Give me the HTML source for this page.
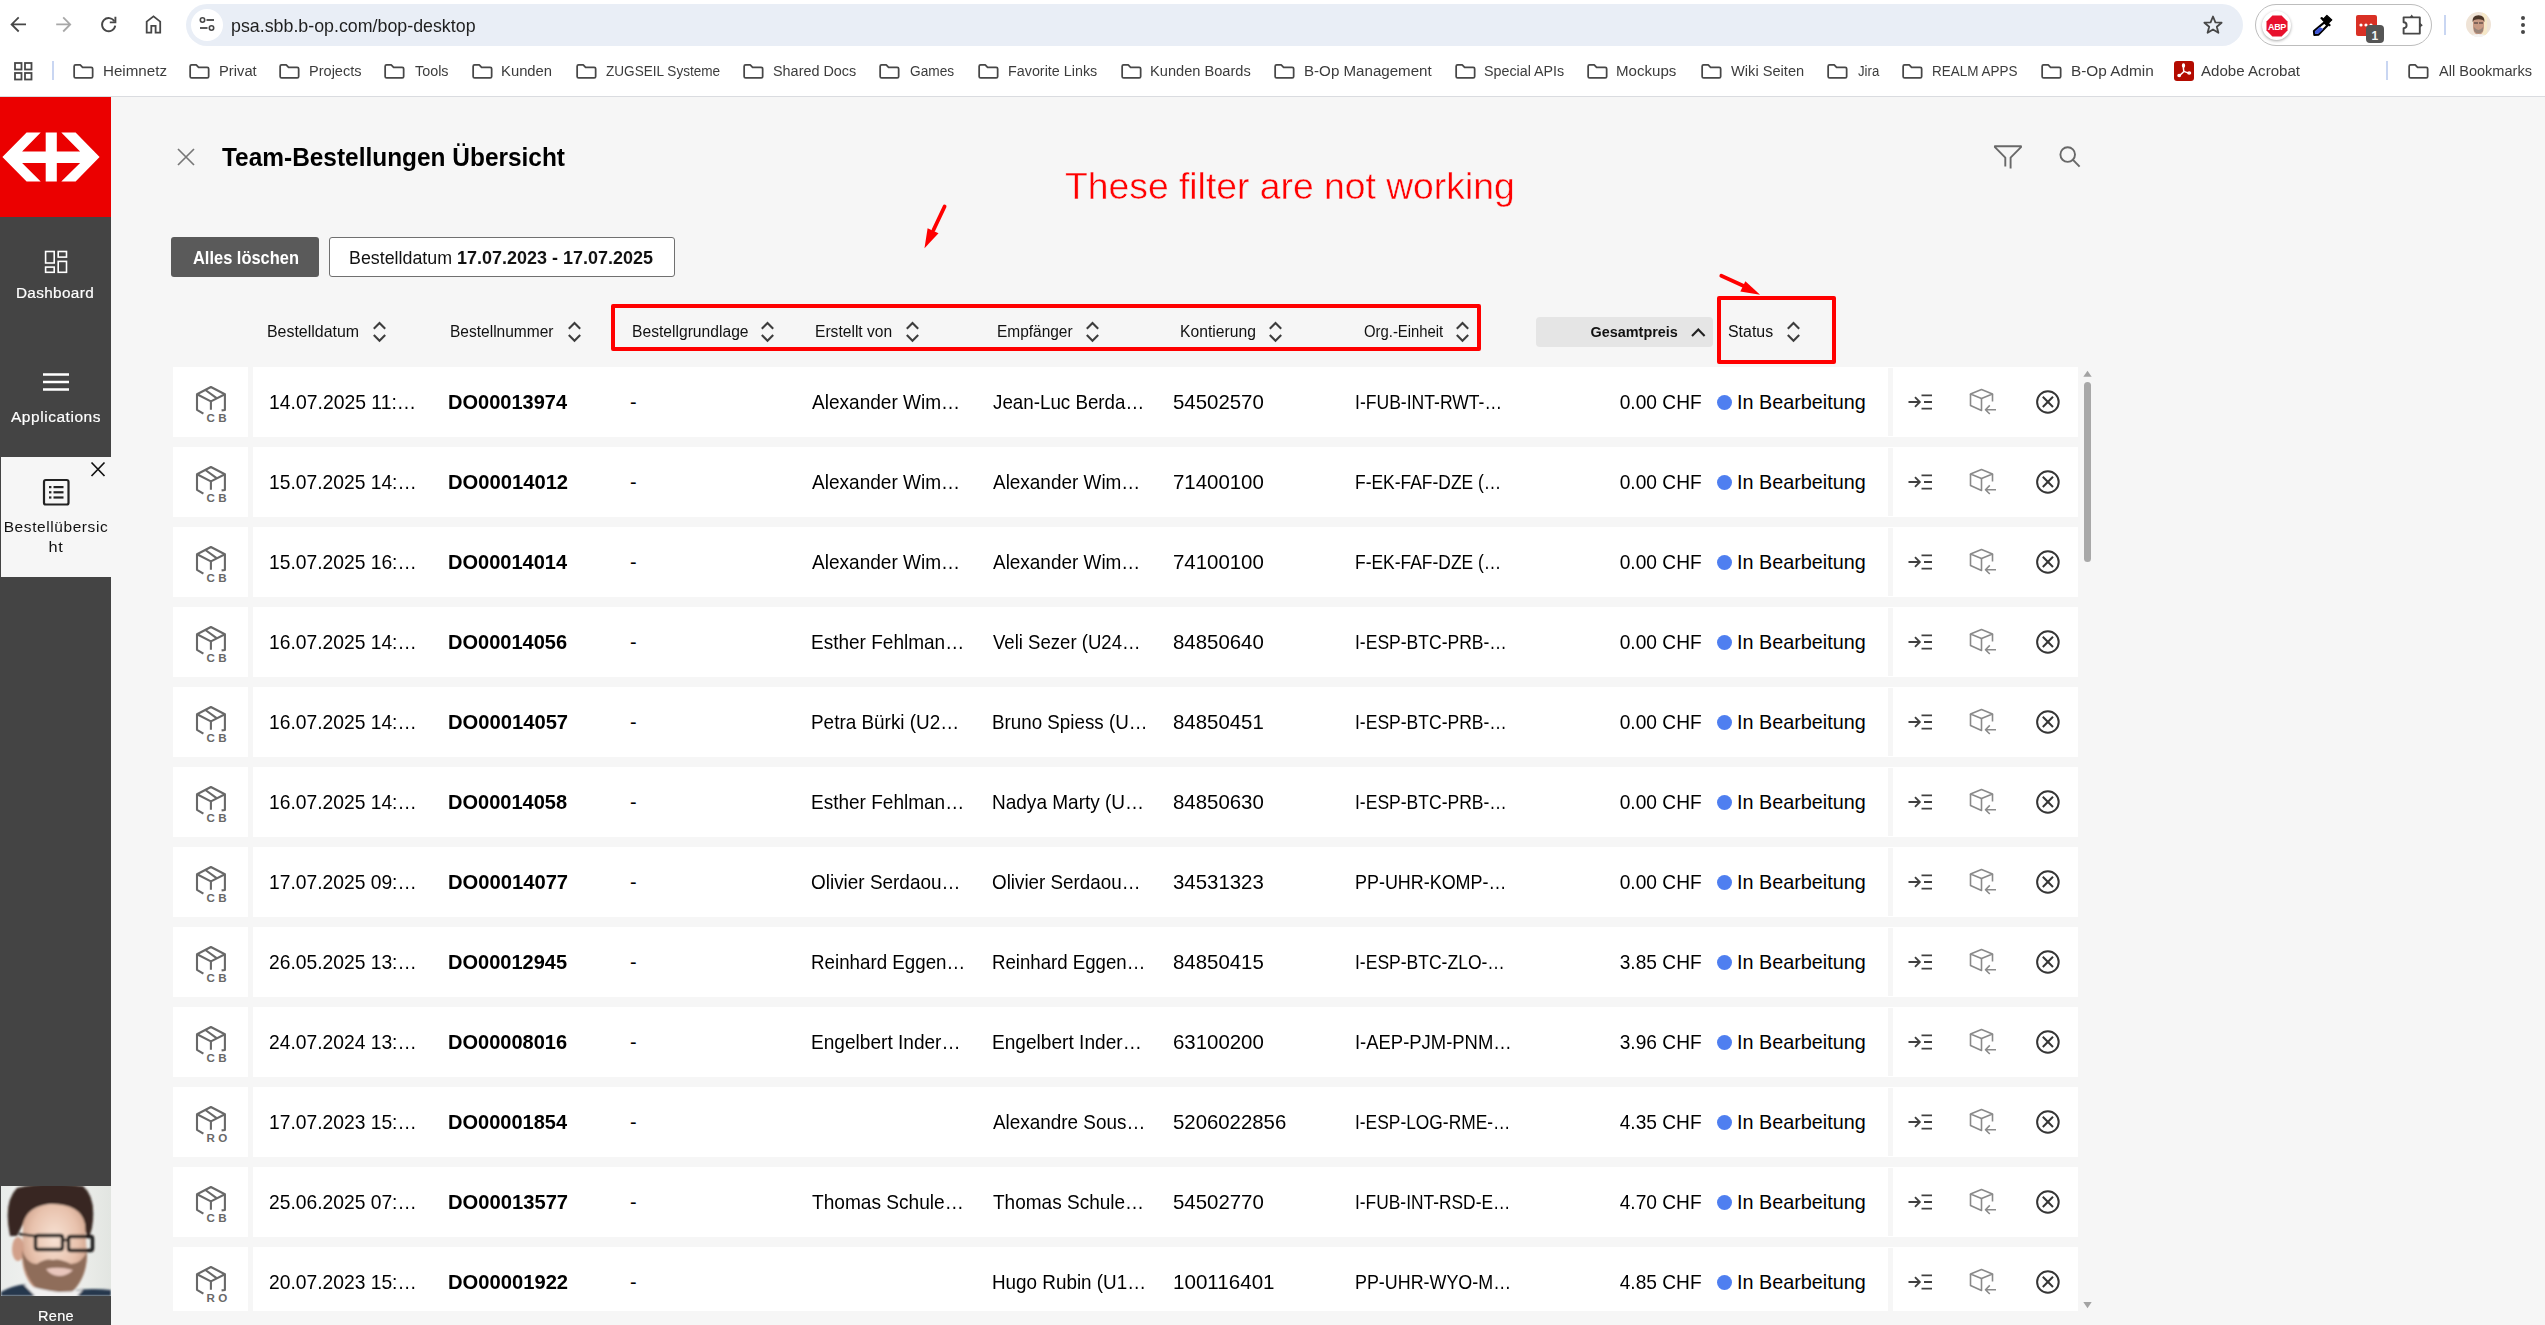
<!DOCTYPE html><html><head><meta charset="utf-8"><style>
html,body{margin:0;padding:0;width:2545px;height:1325px;overflow:hidden;background:#f6f6f6;font-family:'Liberation Sans',sans-serif}
.a{position:absolute;display:block}
.t{position:absolute;white-space:pre;font-family:'Liberation Sans',sans-serif}
</style></head><body>
<div class="a" style="left:0px;top:0px;width:2545px;height:96px;background:#ffffff;"></div>
<div class="a" style="left:0px;top:96px;width:2545px;height:1px;background:#dadce0;"></div>
<svg class="a" style="left:8px;top:14px;" width="22" height="22" viewBox="0 0 22 22"><path d="M18 10.4H3.6 M10.7 3.4 L3.6 10.4 L10.7 17.5" fill="none" stroke="#474747" stroke-width="1.8"/></svg>
<svg class="a" style="left:52px;top:14px;" width="22" height="22" viewBox="0 0 22 22"><path d="M4.2 10.4H18.2 M11.2 3.4 L18.2 10.4 L11.2 17.5" fill="none" stroke="#a8a8a8" stroke-width="1.8"/></svg>
<svg class="a" style="left:97px;top:14px;" width="22" height="22" viewBox="0 0 22 22"><path d="M18.2 11.6 A6.6 6.6 0 1 1 17.4 7.4" fill="none" stroke="#474747" stroke-width="1.9"/><path d="M18.4 2.8 V8.4 H12.8" fill="none" stroke="#474747" stroke-width="1.9"/></svg>
<svg class="a" style="left:142px;top:14px;" width="22" height="22" viewBox="0 0 22 22"><path d="M4.7 18.6 V7.6 L11.5 2.3 L18.2 7.6 V18.6 H13.6 V11.9 H9.3 V18.6 Z" fill="none" stroke="#474747" stroke-width="1.8" stroke-linejoin="miter"/></svg>
<div class="a" style="left:186px;top:4px;width:2057px;height:42px;background:#e9eef6;border-radius:21px;"></div>
<div class="a" style="left:191px;top:9px;width:32px;height:32px;background:#ffffff;border-radius:16px;"></div>
<svg class="a" style="left:197px;top:15px;" width="20" height="20" viewBox="0 0 20 20"><circle cx="5.5" cy="5" r="2.2" fill="none" stroke="#474747" stroke-width="1.6"/><path d="M9.5 5H17" stroke="#474747" stroke-width="1.8"/><circle cx="14.5" cy="13" r="2.2" fill="none" stroke="#474747" stroke-width="1.6"/><path d="M3 13H10.5" stroke="#474747" stroke-width="1.8"/></svg>
<div class="t" id="url" style="left:231.20px;top:17.66px;font-size:17.7px;line-height:17.7px;font-weight:400;color:#1f1f1f;transform:scaleX(1.0069);transform-origin:0 0;">psa.sbb.b-op.com/bop-desktop</div>
<svg class="a" style="left:2202px;top:14px;" width="22" height="22" viewBox="0 0 22 22"><path d="M11 2.5 L13.4 8.3 L19.6 8.7 L14.8 12.7 L16.4 18.8 L11 15.4 L5.6 18.8 L7.2 12.7 L2.4 8.7 L8.6 8.3 Z" fill="none" stroke="#474747" stroke-width="1.8" stroke-linejoin="round"/></svg>
<div class="a" style="left:2255px;top:4px;width:177px;height:42px;background:transparent;border:1px solid #bdbdbd;border-radius:21px;box-sizing:border-box;"></div>
<div class="a" style="left:2262px;top:11px;width:29px;height:29px;border-radius:15px;background:#fff;box-shadow:0 1px 3px rgba(0,0,0,0.35)"></div>
<svg class="a" style="left:2266px;top:15px;" width="22" height="22" viewBox="0 0 22 22"><path d="M6.4 0.5 H15.6 L21.5 6.4 V15.6 L15.6 21.5 H6.4 L0.5 15.6 V6.4 Z" fill="#e8112d"/><text x="11" y="14.6" font-family="Liberation Sans" font-weight="700" font-size="9" fill="#fff" text-anchor="middle" letter-spacing="-0.3">ABP</text></svg>
<svg class="a" style="left:2311px;top:14px;" width="22" height="23" viewBox="0 0 22 23"><path d="M13.4 8.4 L16.4 11.4 L7.6 20.6 L3.3 20.9 L2.9 17 Z" fill="#fff" stroke="#000" stroke-width="2.1" stroke-linejoin="round"/><path d="M8.6 12.9 L12.4 14.9 L7.3 19.8 L4 20 L3.8 17.4 Z" fill="#3d55d6"/><path d="M15.9 1.5 L20.8 5.9 L16.2 10.4 L11.6 5.9 Z" fill="#000" stroke="#000" stroke-width="1.2" stroke-linejoin="round"/><path d="M10.6 4.2 L18.4 11.1" stroke="#000" stroke-width="2.4" stroke-linecap="round"/></svg>
<div class="a" style="left:2356px;top:15px;width:21px;height:21px;background:#d93025;border-radius:2px;"></div>
<svg class="a" style="left:2356px;top:15px;" width="21" height="21" viewBox="0 0 21 21"><circle cx="5" cy="10" r="1.6" fill="#fff"/><circle cx="10" cy="10" r="1.6" fill="#fff"/><circle cx="15" cy="10" r="1.6" fill="#fff"/></svg>
<div class="a" style="left:2366px;top:25px;width:18px;height:18px;background:#555555;border-radius:4px;"></div>
<div class="t" style="left:2371.50px;top:29.80px;font-size:12px;line-height:12px;font-weight:700;color:#f4f4f4;">1</div>
<svg class="a" style="left:2400px;top:13px;" width="26" height="24" viewBox="0 0 26 24"><path d="M3.6 4.4 H19.8 V20.6 H3.6 V15.2 Q6.6 15 6.6 12.2 Q6.6 9.4 3.6 9.2 Z" fill="none" stroke="#474747" stroke-width="1.9" stroke-linejoin="round"/><path d="M9.6 4.4 L11.7 1.6 L13.8 4.4 Z M19.8 9.6 L22.8 12.2 L19.8 14.8 Z" fill="#474747"/></svg>
<div class="a" style="left:2444px;top:15px;width:2px;height:20px;background:#c9d6f2;"></div>
<div class="a" style="left:2466px;top:12px;width:25px;height:25px;border-radius:13px;background:#efe3d6;overflow:hidden"></div>
<svg class="a" style="left:2466px;top:12px;" width="25" height="25" viewBox="0 0 25 25"><defs><clipPath id="avc"><circle cx="12.5" cy="12.5" r="12.5"/></clipPath><filter id="avb"><feGaussianBlur stdDeviation="0.5"/></filter></defs><g clip-path="url(#avc)" filter="url(#avb)"><rect x="16" y="0" width="5" height="25" fill="#f6e8c8"/><path d="M7 10 Q7 4 12.5 4 Q18 4 18 10 L18 16 Q17 23 12.5 23 Q8 23 7 16 Z" fill="#c89a84"/><path d="M6.5 10 Q6 3.5 12.5 3.2 Q19 3.5 18.5 10 L17 8 Q12.5 6.5 8 8 Z" fill="#4a3428"/><path d="M8 15 Q12.5 21 17 15 L17 19 Q12.5 24 8 19 Z" fill="#9a8478"/><path d="M8 11 H12 M13 11 H17" stroke="#3a3030" stroke-width="1"/><path d="M2 25 Q12.5 19 23 25 Z" fill="#f4f4f4"/></g></svg>
<div class="a" style="left:2521px;top:15.5px;width:4px;height:4px;border-radius:2px;background:#474747"></div>
<div class="a" style="left:2521px;top:22.5px;width:4px;height:4px;border-radius:2px;background:#474747"></div>
<div class="a" style="left:2521px;top:29.5px;width:4px;height:4px;border-radius:2px;background:#474747"></div>
<svg class="a" style="left:14px;top:62px;" width="19" height="19" viewBox="0 0 19 19"><g fill="none" stroke="#474747" stroke-width="1.8"><rect x="1" y="1" width="6.5" height="6.5"/><rect x="11" y="1" width="6.5" height="6.5"/><rect x="1" y="11" width="6.5" height="6.5"/><rect x="11" y="11" width="6.5" height="6.5"/></g></svg>
<div class="a" style="left:51.5px;top:61px;width:2px;height:19px;background:#c9d6f2;"></div>
<svg class="a" style="left:73px;top:63px;" width="21" height="17" viewBox="0 0 21 17"><path d="M1.15 3.3 Q1.15 1.8 2.65 1.8 H7.2 L9.6 4.3 H18.15 Q19.65 4.3 19.65 5.8 V13.45 Q19.65 14.95 18.15 14.95 H2.65 Q1.15 14.95 1.15 13.45 Z" fill="none" stroke="#474747" stroke-width="1.75" stroke-linejoin="round"/></svg>
<div class="t" id="bm_Heimnetz" style="left:102.60px;top:64.24px;font-size:14.9px;line-height:14.9px;font-weight:400;color:#3c3c3c;transform:scaleX(1.0177);transform-origin:0 0;">Heimnetz</div>
<svg class="a" style="left:189px;top:63px;" width="21" height="17" viewBox="0 0 21 17"><path d="M1.15 3.3 Q1.15 1.8 2.65 1.8 H7.2 L9.6 4.3 H18.15 Q19.65 4.3 19.65 5.8 V13.45 Q19.65 14.95 18.15 14.95 H2.65 Q1.15 14.95 1.15 13.45 Z" fill="none" stroke="#474747" stroke-width="1.75" stroke-linejoin="round"/></svg>
<div class="t" id="bm_Privat" style="left:219.00px;top:64.24px;font-size:14.9px;line-height:14.9px;font-weight:400;color:#3c3c3c;transform:scaleX(0.9896);transform-origin:0 0;">Privat</div>
<svg class="a" style="left:279px;top:63px;" width="21" height="17" viewBox="0 0 21 17"><path d="M1.15 3.3 Q1.15 1.8 2.65 1.8 H7.2 L9.6 4.3 H18.15 Q19.65 4.3 19.65 5.8 V13.45 Q19.65 14.95 18.15 14.95 H2.65 Q1.15 14.95 1.15 13.45 Z" fill="none" stroke="#474747" stroke-width="1.75" stroke-linejoin="round"/></svg>
<div class="t" id="bm_Projects" style="left:308.60px;top:64.24px;font-size:14.9px;line-height:14.9px;font-weight:400;color:#3c3c3c;transform:scaleX(0.9770);transform-origin:0 0;">Projects</div>
<svg class="a" style="left:384px;top:63px;" width="21" height="17" viewBox="0 0 21 17"><path d="M1.15 3.3 Q1.15 1.8 2.65 1.8 H7.2 L9.6 4.3 H18.15 Q19.65 4.3 19.65 5.8 V13.45 Q19.65 14.95 18.15 14.95 H2.65 Q1.15 14.95 1.15 13.45 Z" fill="none" stroke="#474747" stroke-width="1.75" stroke-linejoin="round"/></svg>
<div class="t" id="bm_Tools" style="left:415.30px;top:64.24px;font-size:14.9px;line-height:14.9px;font-weight:400;color:#3c3c3c;transform:scaleX(0.9637);transform-origin:0 0;">Tools</div>
<svg class="a" style="left:472px;top:63px;" width="21" height="17" viewBox="0 0 21 17"><path d="M1.15 3.3 Q1.15 1.8 2.65 1.8 H7.2 L9.6 4.3 H18.15 Q19.65 4.3 19.65 5.8 V13.45 Q19.65 14.95 18.15 14.95 H2.65 Q1.15 14.95 1.15 13.45 Z" fill="none" stroke="#474747" stroke-width="1.75" stroke-linejoin="round"/></svg>
<div class="t" id="bm_Kunden" style="left:501.30px;top:64.24px;font-size:14.9px;line-height:14.9px;font-weight:400;color:#3c3c3c;transform:scaleX(0.9953);transform-origin:0 0;">Kunden</div>
<svg class="a" style="left:576px;top:63px;" width="21" height="17" viewBox="0 0 21 17"><path d="M1.15 3.3 Q1.15 1.8 2.65 1.8 H7.2 L9.6 4.3 H18.15 Q19.65 4.3 19.65 5.8 V13.45 Q19.65 14.95 18.15 14.95 H2.65 Q1.15 14.95 1.15 13.45 Z" fill="none" stroke="#474747" stroke-width="1.75" stroke-linejoin="round"/></svg>
<div class="t" id="bm_ZUGSEIL Systeme" style="left:605.60px;top:64.24px;font-size:14.9px;line-height:14.9px;font-weight:400;color:#3c3c3c;transform:scaleX(0.9117);transform-origin:0 0;">ZUGSEIL Systeme</div>
<svg class="a" style="left:743px;top:63px;" width="21" height="17" viewBox="0 0 21 17"><path d="M1.15 3.3 Q1.15 1.8 2.65 1.8 H7.2 L9.6 4.3 H18.15 Q19.65 4.3 19.65 5.8 V13.45 Q19.65 14.95 18.15 14.95 H2.65 Q1.15 14.95 1.15 13.45 Z" fill="none" stroke="#474747" stroke-width="1.75" stroke-linejoin="round"/></svg>
<div class="t" id="bm_Shared Docs" style="left:772.90px;top:64.24px;font-size:14.9px;line-height:14.9px;font-weight:400;color:#3c3c3c;transform:scaleX(0.9673);transform-origin:0 0;">Shared Docs</div>
<svg class="a" style="left:879px;top:63px;" width="21" height="17" viewBox="0 0 21 17"><path d="M1.15 3.3 Q1.15 1.8 2.65 1.8 H7.2 L9.6 4.3 H18.15 Q19.65 4.3 19.65 5.8 V13.45 Q19.65 14.95 18.15 14.95 H2.65 Q1.15 14.95 1.15 13.45 Z" fill="none" stroke="#474747" stroke-width="1.75" stroke-linejoin="round"/></svg>
<div class="t" id="bm_Games" style="left:910.00px;top:64.24px;font-size:14.9px;line-height:14.9px;font-weight:400;color:#3c3c3c;transform:scaleX(0.9202);transform-origin:0 0;">Games</div>
<svg class="a" style="left:978px;top:63px;" width="21" height="17" viewBox="0 0 21 17"><path d="M1.15 3.3 Q1.15 1.8 2.65 1.8 H7.2 L9.6 4.3 H18.15 Q19.65 4.3 19.65 5.8 V13.45 Q19.65 14.95 18.15 14.95 H2.65 Q1.15 14.95 1.15 13.45 Z" fill="none" stroke="#474747" stroke-width="1.75" stroke-linejoin="round"/></svg>
<div class="t" id="bm_Favorite Links" style="left:1007.60px;top:64.24px;font-size:14.9px;line-height:14.9px;font-weight:400;color:#3c3c3c;transform:scaleX(0.9627);transform-origin:0 0;">Favorite Links</div>
<svg class="a" style="left:1121px;top:63px;" width="21" height="17" viewBox="0 0 21 17"><path d="M1.15 3.3 Q1.15 1.8 2.65 1.8 H7.2 L9.6 4.3 H18.15 Q19.65 4.3 19.65 5.8 V13.45 Q19.65 14.95 18.15 14.95 H2.65 Q1.15 14.95 1.15 13.45 Z" fill="none" stroke="#474747" stroke-width="1.75" stroke-linejoin="round"/></svg>
<div class="t" id="bm_Kunden Boards" style="left:1150.00px;top:64.24px;font-size:14.9px;line-height:14.9px;font-weight:400;color:#3c3c3c;transform:scaleX(0.9818);transform-origin:0 0;">Kunden Boards</div>
<svg class="a" style="left:1274px;top:63px;" width="21" height="17" viewBox="0 0 21 17"><path d="M1.15 3.3 Q1.15 1.8 2.65 1.8 H7.2 L9.6 4.3 H18.15 Q19.65 4.3 19.65 5.8 V13.45 Q19.65 14.95 18.15 14.95 H2.65 Q1.15 14.95 1.15 13.45 Z" fill="none" stroke="#474747" stroke-width="1.75" stroke-linejoin="round"/></svg>
<div class="t" id="bm_B-Op Management" style="left:1304.30px;top:64.24px;font-size:14.9px;line-height:14.9px;font-weight:400;color:#3c3c3c;transform:scaleX(1.0153);transform-origin:0 0;">B-Op Management</div>
<svg class="a" style="left:1454.5px;top:63px;" width="21" height="17" viewBox="0 0 21 17"><path d="M1.15 3.3 Q1.15 1.8 2.65 1.8 H7.2 L9.6 4.3 H18.15 Q19.65 4.3 19.65 5.8 V13.45 Q19.65 14.95 18.15 14.95 H2.65 Q1.15 14.95 1.15 13.45 Z" fill="none" stroke="#474747" stroke-width="1.75" stroke-linejoin="round"/></svg>
<div class="t" id="bm_Special APIs" style="left:1483.90px;top:64.24px;font-size:14.9px;line-height:14.9px;font-weight:400;color:#3c3c3c;transform:scaleX(0.9592);transform-origin:0 0;">Special APIs</div>
<svg class="a" style="left:1587px;top:63px;" width="21" height="17" viewBox="0 0 21 17"><path d="M1.15 3.3 Q1.15 1.8 2.65 1.8 H7.2 L9.6 4.3 H18.15 Q19.65 4.3 19.65 5.8 V13.45 Q19.65 14.95 18.15 14.95 H2.65 Q1.15 14.95 1.15 13.45 Z" fill="none" stroke="#474747" stroke-width="1.75" stroke-linejoin="round"/></svg>
<div class="t" id="bm_Mockups" style="left:1616.00px;top:64.24px;font-size:14.9px;line-height:14.9px;font-weight:400;color:#3c3c3c;transform:scaleX(1.0129);transform-origin:0 0;">Mockups</div>
<svg class="a" style="left:1701px;top:63px;" width="21" height="17" viewBox="0 0 21 17"><path d="M1.15 3.3 Q1.15 1.8 2.65 1.8 H7.2 L9.6 4.3 H18.15 Q19.65 4.3 19.65 5.8 V13.45 Q19.65 14.95 18.15 14.95 H2.65 Q1.15 14.95 1.15 13.45 Z" fill="none" stroke="#474747" stroke-width="1.75" stroke-linejoin="round"/></svg>
<div class="t" id="bm_Wiki Seiten" style="left:1731.00px;top:64.24px;font-size:14.9px;line-height:14.9px;font-weight:400;color:#3c3c3c;transform:scaleX(0.9828);transform-origin:0 0;">Wiki Seiten</div>
<svg class="a" style="left:1827px;top:63px;" width="21" height="17" viewBox="0 0 21 17"><path d="M1.15 3.3 Q1.15 1.8 2.65 1.8 H7.2 L9.6 4.3 H18.15 Q19.65 4.3 19.65 5.8 V13.45 Q19.65 14.95 18.15 14.95 H2.65 Q1.15 14.95 1.15 13.45 Z" fill="none" stroke="#474747" stroke-width="1.75" stroke-linejoin="round"/></svg>
<div class="t" id="bm_Jira" style="left:1857.60px;top:64.24px;font-size:14.9px;line-height:14.9px;font-weight:400;color:#3c3c3c;transform:scaleX(0.8863);transform-origin:0 0;">Jira</div>
<svg class="a" style="left:1902px;top:63px;" width="21" height="17" viewBox="0 0 21 17"><path d="M1.15 3.3 Q1.15 1.8 2.65 1.8 H7.2 L9.6 4.3 H18.15 Q19.65 4.3 19.65 5.8 V13.45 Q19.65 14.95 18.15 14.95 H2.65 Q1.15 14.95 1.15 13.45 Z" fill="none" stroke="#474747" stroke-width="1.75" stroke-linejoin="round"/></svg>
<div class="t" id="bm_REALM APPS" style="left:1931.90px;top:64.24px;font-size:14.9px;line-height:14.9px;font-weight:400;color:#3c3c3c;transform:scaleX(0.9064);transform-origin:0 0;">REALM APPS</div>
<svg class="a" style="left:2041px;top:63px;" width="21" height="17" viewBox="0 0 21 17"><path d="M1.15 3.3 Q1.15 1.8 2.65 1.8 H7.2 L9.6 4.3 H18.15 Q19.65 4.3 19.65 5.8 V13.45 Q19.65 14.95 18.15 14.95 H2.65 Q1.15 14.95 1.15 13.45 Z" fill="none" stroke="#474747" stroke-width="1.75" stroke-linejoin="round"/></svg>
<div class="t" id="bm_B-Op Admin" style="left:2070.60px;top:64.24px;font-size:14.9px;line-height:14.9px;font-weight:400;color:#3c3c3c;transform:scaleX(1.0315);transform-origin:0 0;">B-Op Admin</div>
<div class="a" style="left:2174px;top:61px;width:20px;height:20px;background:#b30b00;border-radius:3px;"></div>
<svg class="a" style="left:2174px;top:61px;" width="20" height="20" viewBox="0 0 20 20"><g fill="none" stroke="#fff" stroke-width="1.5" stroke-linecap="round"><path d="M9.9 10.4 Q9.2 7.5 9.5 4.6 M9.9 10.4 Q7.6 12.8 5.3 14.6 M9.9 10.4 Q12.6 11.6 15 12"/><ellipse cx="9.5" cy="4.4" rx="0.9" ry="1.5"/><ellipse cx="5.2" cy="14.6" rx="1.2" ry="1"/><ellipse cx="15.2" cy="12" rx="1.3" ry="0.9"/></g></svg>
<div class="t" id="bm_adobe" style="left:2201.40px;top:64.24px;font-size:14.9px;line-height:14.9px;font-weight:400;color:#3c3c3c;transform:scaleX(1.0140);transform-origin:0 0;">Adobe Acrobat</div>
<div class="a" style="left:2386px;top:61px;width:2px;height:19px;background:#c9d6f2;"></div>
<svg class="a" style="left:2408px;top:63px;" width="21" height="17" viewBox="0 0 21 17"><path d="M1.15 3.3 Q1.15 1.8 2.65 1.8 H7.2 L9.6 4.3 H18.15 Q19.65 4.3 19.65 5.8 V13.45 Q19.65 14.95 18.15 14.95 H2.65 Q1.15 14.95 1.15 13.45 Z" fill="none" stroke="#474747" stroke-width="1.75" stroke-linejoin="round"/></svg>
<div class="t" id="bm_all" style="left:2439.00px;top:64.24px;font-size:14.9px;line-height:14.9px;font-weight:400;color:#3c3c3c;transform:scaleX(0.9771);transform-origin:0 0;">All Bookmarks</div>
<div class="a" style="left:0px;top:97px;width:111px;height:1228px;background:#444444;"></div>
<div class="a" style="left:0px;top:97px;width:111px;height:120px;background:#eb0000;"></div>
<svg class="a" style="left:0px;top:120px;" width="111" height="75" viewBox="0 0 111 75"><path fill="#fff" d="M2.4 37.1 L26.6 12.6 L40.7 12.6 L22.1 31.6 L45.7 31.6 L45.7 12.6 L56.8 12.6 L56.8 31.6 L80.1 31.6 L61.3 12.6 L75.6 12.6 L99.6 37.1 L75.6 61.6 L61.3 61.6 L80.1 42.9 L56.8 42.9 L56.8 61.6 L45.7 61.6 L45.7 42.9 L22.1 42.9 L40.7 61.6 L26.6 61.6 Z"/></svg>
<svg class="a" style="left:40px;top:246px;" width="32" height="32" viewBox="0 0 32 32"><g fill="none" stroke="#fff" stroke-width="1.6"><rect x="5.6" y="5.5" width="8.6" height="11.5"/><rect x="5.6" y="21.1" width="8.6" height="5.2"/><rect x="18.2" y="5.5" width="8.3" height="5.6"/><rect x="18.2" y="15.4" width="8.3" height="10.9"/></g></svg>
<div class="t" id="sb_dash" style="left:-94.70px;width:300px;text-align:center;top:284.72px;font-size:15.5px;line-height:15.5px;font-weight:400;color:#ffffff;letter-spacing:0.35px;transform:scaleX(0.9882);transform-origin:50% 0;-webkit-text-stroke:0.2px #fff;">Dashboard</div>
<svg class="a" style="left:40px;top:365px;" width="32" height="32" viewBox="0 0 32 32"><g stroke="#fff" stroke-width="2.6"><path d="M3 9.5H29 M3 17H29 M3 24.5H29"/></g></svg>
<div class="t" id="sb_app" style="left:-94.30px;width:300px;text-align:center;top:408.72px;font-size:15.5px;line-height:15.5px;font-weight:400;color:#ffffff;letter-spacing:0.55px;transform:scaleX(0.9995);transform-origin:50% 0;-webkit-text-stroke:0.2px #fff;">Applications</div>
<div class="a" style="left:1px;top:457px;width:110px;height:120px;background:#f6f6f6;"></div>
<svg class="a" style="left:88px;top:460px;" width="20" height="20" viewBox="0 0 20 20"><path d="M3.5 2.5 L16.5 16 M16.5 2.5 L3.5 16" stroke="#111" stroke-width="1.7"/></svg>
<svg class="a" style="left:41px;top:477px;" width="30" height="30" viewBox="0 0 30 30"><rect x="3" y="3" width="24.5" height="24.5" rx="1.8" fill="none" stroke="#222" stroke-width="2.2"/><g fill="#222"><rect x="8" y="9" width="2.4" height="2.2"/><rect x="8" y="14.2" width="2.4" height="2.2"/><rect x="8" y="19.4" width="2.4" height="2.2"/><rect x="12.5" y="9" width="10" height="2.2"/><rect x="12.5" y="14.2" width="10" height="2.2"/><rect x="12.5" y="19.4" width="10" height="2.2"/></g></svg>
<div class="t" id="sb_b1" style="left:-94.00px;width:300px;text-align:center;top:518.62px;font-size:15.5px;line-height:15.5px;font-weight:400;color:#111;letter-spacing:0.6px;transform:scaleX(0.9968);transform-origin:50% 0;">Bestellübersic</div>
<div class="t" id="sb_b2" style="left:-94.20px;width:300px;text-align:center;top:538.73px;font-size:15.5px;line-height:15.5px;font-weight:400;color:#111;letter-spacing:0.6px;transform:scaleX(1.0531);transform-origin:50% 0;">ht</div>
<svg class="a" style="left:1px;top:1186px;" width="110" height="110" viewBox="0 0 110 110"><defs><filter id="bl" x="-10%" y="-10%" width="120%" height="120%"><feGaussianBlur stdDeviation="1.3"/></filter><linearGradient id="bgg" x1="0" x2="1"><stop offset="0" stop-color="#e9ecea"/><stop offset="0.5" stop-color="#f4f4f2"/><stop offset="1" stop-color="#e2e5e1"/></linearGradient><radialGradient id="skin" cx="0.5" cy="0.38" r="0.6"><stop offset="0" stop-color="#f8e2d4"/><stop offset="0.6" stop-color="#e8c2ad"/><stop offset="1" stop-color="#c99a84"/></radialGradient></defs><rect width="110" height="110" fill="url(#bgg)"/><g filter="url(#bl)"><path d="M9 50 Q2 16 16 2 Q45 -6 82 0 Q96 12 91 42 L88 52 L83 44 Q78 22 50 18 Q28 20 23 36 L16 50 Z" fill="#382820"/><path d="M22 38 Q26 20 50 18 Q80 18 84 38 L86 72 Q84 100 62 110 L44 110 Q22 98 21 72 Z" fill="url(#skin)"/><ellipse cx="17" cy="63" rx="6" ry="12" fill="#d2a08a"/><path d="M21 64 Q22 94 42 108 L66 110 Q86 96 86 66 Q80 78 70 78 Q58 72 52 74 Q44 72 36 78 Q26 78 21 64 Z" fill="#8f6d5a"/><path d="M45 83 Q58 80 72 84 Q66 90 58 90 Q50 90 45 83 Z" fill="#e9c6bc"/><rect x="34.5" y="49.5" width="27" height="14" rx="2" fill="none" stroke="#181412" stroke-width="3.4"/><rect x="67.5" y="50.5" width="24" height="14" rx="2" fill="none" stroke="#181412" stroke-width="3.4"/><path d="M62 54 L67 54 M18 48 L34 50" stroke="#2a2522" stroke-width="2.5"/><path d="M0 106 L0 110 L110 110 L110 104 Q92 102 76 104 L66 110 L40 110 L24 98 Q10 100 0 106 Z" fill="#26374d"/><path d="M22 98 L34 110 L76 110 L82 104 Q70 106 58 106 Q40 104 22 98 Z" fill="#f1f0f0"/></g></svg>
<div class="t" id="sb_rene" style="left:-94.50px;width:300px;text-align:center;top:1307.62px;font-size:15.5px;line-height:15.5px;font-weight:400;color:#ffffff;letter-spacing:0.3px;transform:scaleX(0.9342);transform-origin:50% 0;-webkit-text-stroke:0.2px #fff;">Rene</div>
<svg class="a" style="left:176px;top:147px;" width="20" height="20" viewBox="0 0 20 20"><path d="M2 2 L18 18 M18 2 L2 18" stroke="#777" stroke-width="1.7"/></svg>
<div class="t" id="title" style="left:221.80px;top:145.17px;font-size:25.8px;line-height:25.8px;font-weight:700;color:#000;transform:scaleX(0.9470);transform-origin:0 0;">Team-Bestellungen Übersicht</div>
<svg class="a" style="left:1990px;top:140px;" width="36" height="36" viewBox="0 0 36 36"><path d="M20.6 28.4 V17.7 L31 7.2 V6.3 H4.9 V7.2 L15.3 17.7 V26.5" fill="none" stroke="#686868" stroke-width="1.9" stroke-linejoin="round"/></svg>
<svg class="a" style="left:2052px;top:140px;" width="36" height="36" viewBox="0 0 36 36"><circle cx="15.7" cy="14.6" r="7.3" fill="none" stroke="#686868" stroke-width="1.9"/><path d="M21 19.9 L27.6 26.6" stroke="#686868" stroke-width="2"/></svg>
<div class="t" id="annot" style="left:1064.50px;top:167.75px;font-size:37px;line-height:37px;font-weight:400;color:#ff0000;transform:scaleX(1.0076);transform-origin:0 0;-webkit-text-stroke:0.45px #f6f6f6;">These filter are not working</div>
<div class="a" style="left:171px;top:237px;width:148px;height:40px;background:#5a5a5a;border-radius:3px;"></div>
<div class="t" id="btn1" style="left:192.80px;top:249.87px;font-size:17.8px;line-height:17.8px;font-weight:700;color:#fff;transform:scaleX(0.9243);transform-origin:0 0;">Alles löschen</div>
<div class="a" style="left:329px;top:237px;width:346px;height:40px;background:#fff;border:1px solid #707070;border-radius:3px;box-sizing:border-box;"></div>
<div class="t" id="chip1" style="left:349.40px;top:250.12px;font-size:17.5px;line-height:17.5px;font-weight:400;color:#111;transform:scaleX(1.0182);transform-origin:0 0;">Bestelldatum</div>
<div class="t" id="chip2" style="left:457.00px;top:249.78px;font-size:17.9px;line-height:17.9px;font-weight:700;color:#111;transform:scaleX(1.0052);transform-origin:0 0;">17.07.2023 - 17.07.2025</div>
<div class="t" id="h_Bestelldatum" style="left:267.40px;top:324.24px;font-size:15.6px;line-height:15.6px;font-weight:400;color:#111;transform:scaleX(1.0211);transform-origin:0 0;">Bestelldatum</div>
<svg class="a" style="left:371.6px;top:321px;" width="15" height="22" viewBox="0 0 15 22"><path d="M1.8 7.8 L7.5 2 L13.2 7.8 M1.8 14 L7.5 19.8 L13.2 14" fill="none" stroke="#3d3d3d" stroke-width="2.1"/></svg>
<div class="t" id="h_Bestellnummer" style="left:450.00px;top:324.24px;font-size:15.6px;line-height:15.6px;font-weight:400;color:#111;transform:scaleX(0.9953);transform-origin:0 0;">Bestellnummer</div>
<svg class="a" style="left:567.4px;top:321px;" width="15" height="22" viewBox="0 0 15 22"><path d="M1.8 7.8 L7.5 2 L13.2 7.8 M1.8 14 L7.5 19.8 L13.2 14" fill="none" stroke="#3d3d3d" stroke-width="2.1"/></svg>
<div class="t" id="h_Bestellgrundlage" style="left:632.40px;top:324.24px;font-size:15.6px;line-height:15.6px;font-weight:400;color:#111;transform:scaleX(1.0032);transform-origin:0 0;">Bestellgrundlage</div>
<svg class="a" style="left:760.4px;top:321px;" width="15" height="22" viewBox="0 0 15 22"><path d="M1.8 7.8 L7.5 2 L13.2 7.8 M1.8 14 L7.5 19.8 L13.2 14" fill="none" stroke="#3d3d3d" stroke-width="2.1"/></svg>
<div class="t" id="h_Erstellt von" style="left:814.70px;top:324.24px;font-size:15.6px;line-height:15.6px;font-weight:400;color:#111;transform:scaleX(1.0011);transform-origin:0 0;">Erstellt von</div>
<svg class="a" style="left:904.9px;top:321px;" width="15" height="22" viewBox="0 0 15 22"><path d="M1.8 7.8 L7.5 2 L13.2 7.8 M1.8 14 L7.5 19.8 L13.2 14" fill="none" stroke="#3d3d3d" stroke-width="2.1"/></svg>
<div class="t" id="h_Empfänger" style="left:997.40px;top:324.24px;font-size:15.6px;line-height:15.6px;font-weight:400;color:#111;transform:scaleX(0.9910);transform-origin:0 0;">Empfänger</div>
<svg class="a" style="left:1084.8px;top:321px;" width="15" height="22" viewBox="0 0 15 22"><path d="M1.8 7.8 L7.5 2 L13.2 7.8 M1.8 14 L7.5 19.8 L13.2 14" fill="none" stroke="#3d3d3d" stroke-width="2.1"/></svg>
<div class="t" id="h_Kontierung" style="left:1179.70px;top:324.24px;font-size:15.6px;line-height:15.6px;font-weight:400;color:#111;transform:scaleX(1.0060);transform-origin:0 0;">Kontierung</div>
<svg class="a" style="left:1267.6px;top:321px;" width="15" height="22" viewBox="0 0 15 22"><path d="M1.8 7.8 L7.5 2 L13.2 7.8 M1.8 14 L7.5 19.8 L13.2 14" fill="none" stroke="#3d3d3d" stroke-width="2.1"/></svg>
<div class="t" id="h_Org.-Einheit" style="left:1364.00px;top:324.24px;font-size:15.6px;line-height:15.6px;font-weight:400;color:#111;transform:scaleX(0.9523);transform-origin:0 0;">Org.-Einheit</div>
<svg class="a" style="left:1455.3px;top:321px;" width="15" height="22" viewBox="0 0 15 22"><path d="M1.8 7.8 L7.5 2 L13.2 7.8 M1.8 14 L7.5 19.8 L13.2 14" fill="none" stroke="#3d3d3d" stroke-width="2.1"/></svg>
<div class="t" id="h_Status" style="left:1728.10px;top:324.24px;font-size:15.6px;line-height:15.6px;font-weight:400;color:#111;transform:scaleX(1.0212);transform-origin:0 0;">Status</div>
<svg class="a" style="left:1785.6px;top:321px;" width="15" height="22" viewBox="0 0 15 22"><path d="M1.8 7.8 L7.5 2 L13.2 7.8 M1.8 14 L7.5 19.8 L13.2 14" fill="none" stroke="#3d3d3d" stroke-width="2.1"/></svg>
<div class="a" style="left:1536px;top:317px;width:177px;height:30px;background:#e5e5e5;border-radius:4px;"></div>
<div class="t" id="h_ges" style="right:867.00px;top:325.18px;font-size:14.5px;line-height:14.5px;font-weight:700;color:#111;transform:scaleX(0.9945);transform-origin:100% 0;">Gesamtpreis</div>
<svg class="a" style="left:1690px;top:326px;" width="17" height="12" viewBox="0 0 17 12"><path d="M2 10 L8.3 3.5 L14.6 10" fill="none" stroke="#222" stroke-width="2.1"/></svg>
<div class="a" style="left:0;top:0;width:2545px;height:1311px;overflow:hidden">
<div class="a" style="left:173px;top:367px;width:75px;height:70px;background:#fff;"></div>
<div class="a" style="left:253px;top:367px;width:1825px;height:70px;background:#fff;"></div>
<div class="a" style="left:1888px;top:368px;width:5px;height:68px;background:#f6f6f6;"></div>
<svg class="a" style="left:194px;top:384px;" width="34" height="42" viewBox="0 0 34 42"><g fill="none" stroke="#686868" stroke-width="2.1" stroke-linejoin="round" stroke-linecap="butt"><path d="M16.9 3 L30.9 10.2 L16.9 17.4 L3 10.2 Z"/><path d="M11.4 6 L22.6 14.2"/><path d="M3 10.2 V25.8 L9.4 29.6 M30.9 10.2 V26 L27.6 26.4 M16.9 17.4 V25.8"/></g><text x="12.4" y="37.7" font-family="Liberation Sans" font-weight="700" font-size="11.6" fill="#686868" letter-spacing="3.4">CB</text></svg>
<div class="t" id="r0_0" style="left:268.50px;top:393.17px;font-size:19.8px;line-height:19.8px;font-weight:400;color:#000;transform:scaleX(0.9796);transform-origin:0 0;">14.07.2025 11:…</div>
<div class="t" id="r0_1" style="left:448.10px;top:393.17px;font-size:19.8px;line-height:19.8px;font-weight:700;color:#000;transform:scaleX(1.0120);transform-origin:0 0;">DO00013974</div>
<div class="t" id="r0_2" style="left:630.00px;top:393.17px;font-size:19.8px;line-height:19.8px;font-weight:400;color:#000;">-</div>
<div class="t" id="r0_3" style="left:811.70px;top:393.17px;font-size:19.8px;line-height:19.8px;font-weight:400;color:#000;transform:scaleX(0.9628);transform-origin:0 0;">Alexander Wim…</div>
<div class="t" id="r0_4" style="left:993.10px;top:393.17px;font-size:19.8px;line-height:19.8px;font-weight:400;color:#000;transform:scaleX(0.9487);transform-origin:0 0;">Jean-Luc Berda…</div>
<div class="t" id="r0_5" style="left:1173.30px;top:393.17px;font-size:19.8px;line-height:19.8px;font-weight:400;color:#000;transform:scaleX(1.0318);transform-origin:0 0;">54502570</div>
<div class="t" id="r0_6" style="left:1354.50px;top:393.17px;font-size:19.8px;line-height:19.8px;font-weight:400;color:#000;transform:scaleX(0.8880);transform-origin:0 0;">I-FUB-INT-RWT-…</div>
<div class="t" id="r0_7" style="right:843.00px;top:393.17px;font-size:19.8px;line-height:19.8px;font-weight:400;color:#000;transform:scaleX(0.9679);transform-origin:100% 0;">0.00 CHF</div>
<div class="a" style="left:1717px;top:395px;width:15px;height:15px;border-radius:8px;background:#4f7ff0"></div>
<div class="t" id="r0_8" style="left:1737.00px;top:393.17px;font-size:19.8px;line-height:19.8px;font-weight:400;color:#000;">In Bearbeitung</div>
<svg class="a" style="left:1906px;top:393px;" width="28" height="18" viewBox="0 0 28 18"><g fill="none" stroke="#404040" stroke-width="1.9"><path d="M2.5 9H13.5 M9 4.2 L13.8 9 L9 13.8"/><path d="M15.5 2.4H26 M18 9H26 M15.5 15.6H26"/></g></svg>
<svg class="a" style="left:1968px;top:388px;" width="32" height="28" viewBox="0 0 32 28"><g fill="none" stroke="#8a8a8a" stroke-width="1.6" stroke-linejoin="round"><path d="M13.5 1.5 L24.5 6 L13.5 10.5 L2.5 6 Z"/><path d="M2.5 6 V17.5 L13.5 22.5 V10.5 M24.5 6 V13.5"/><path d="M28 21.7 H17.5 M21.8 17.4 L17.5 21.7 L21.8 26"/></g></svg>
<svg class="a" style="left:2034px;top:388px;" width="28" height="28" viewBox="0 0 28 28"><circle cx="13.9" cy="14" r="10.8" fill="none" stroke="#363636" stroke-width="2"/><path d="M8.8 8.8 L19 19 M19 8.8 L8.8 19" stroke="#363636" stroke-width="2"/></svg>
<div class="a" style="left:173px;top:447px;width:75px;height:70px;background:#fff;"></div>
<div class="a" style="left:253px;top:447px;width:1825px;height:70px;background:#fff;"></div>
<div class="a" style="left:1888px;top:448px;width:5px;height:68px;background:#f6f6f6;"></div>
<svg class="a" style="left:194px;top:464px;" width="34" height="42" viewBox="0 0 34 42"><g fill="none" stroke="#686868" stroke-width="2.1" stroke-linejoin="round" stroke-linecap="butt"><path d="M16.9 3 L30.9 10.2 L16.9 17.4 L3 10.2 Z"/><path d="M11.4 6 L22.6 14.2"/><path d="M3 10.2 V25.8 L9.4 29.6 M30.9 10.2 V26 L27.6 26.4 M16.9 17.4 V25.8"/></g><text x="12.4" y="37.7" font-family="Liberation Sans" font-weight="700" font-size="11.6" fill="#686868" letter-spacing="3.4">CB</text></svg>
<div class="t" id="r1_0" style="left:268.50px;top:473.17px;font-size:19.8px;line-height:19.8px;font-weight:400;color:#000;transform:scaleX(0.9732);transform-origin:0 0;">15.07.2025 14:…</div>
<div class="t" id="r1_1" style="left:448.10px;top:473.17px;font-size:19.8px;line-height:19.8px;font-weight:700;color:#000;transform:scaleX(1.0204);transform-origin:0 0;">DO00014012</div>
<div class="t" id="r1_2" style="left:630.00px;top:473.17px;font-size:19.8px;line-height:19.8px;font-weight:400;color:#000;">-</div>
<div class="t" id="r1_3" style="left:811.70px;top:473.17px;font-size:19.8px;line-height:19.8px;font-weight:400;color:#000;transform:scaleX(0.9628);transform-origin:0 0;">Alexander Wim…</div>
<div class="t" id="r1_4" style="left:993.10px;top:473.17px;font-size:19.8px;line-height:19.8px;font-weight:400;color:#000;transform:scaleX(0.9572);transform-origin:0 0;">Alexander Wim…</div>
<div class="t" id="r1_5" style="left:1173.30px;top:473.17px;font-size:19.8px;line-height:19.8px;font-weight:400;color:#000;transform:scaleX(1.0318);transform-origin:0 0;">71400100</div>
<div class="t" id="r1_6" style="left:1354.50px;top:473.17px;font-size:19.8px;line-height:19.8px;font-weight:400;color:#000;transform:scaleX(0.8818);transform-origin:0 0;">F-EK-FAF-DZE (…</div>
<div class="t" id="r1_7" style="right:843.00px;top:473.17px;font-size:19.8px;line-height:19.8px;font-weight:400;color:#000;transform:scaleX(0.9679);transform-origin:100% 0;">0.00 CHF</div>
<div class="a" style="left:1717px;top:475px;width:15px;height:15px;border-radius:8px;background:#4f7ff0"></div>
<div class="t" id="r1_8" style="left:1737.00px;top:473.17px;font-size:19.8px;line-height:19.8px;font-weight:400;color:#000;">In Bearbeitung</div>
<svg class="a" style="left:1906px;top:473px;" width="28" height="18" viewBox="0 0 28 18"><g fill="none" stroke="#404040" stroke-width="1.9"><path d="M2.5 9H13.5 M9 4.2 L13.8 9 L9 13.8"/><path d="M15.5 2.4H26 M18 9H26 M15.5 15.6H26"/></g></svg>
<svg class="a" style="left:1968px;top:468px;" width="32" height="28" viewBox="0 0 32 28"><g fill="none" stroke="#8a8a8a" stroke-width="1.6" stroke-linejoin="round"><path d="M13.5 1.5 L24.5 6 L13.5 10.5 L2.5 6 Z"/><path d="M2.5 6 V17.5 L13.5 22.5 V10.5 M24.5 6 V13.5"/><path d="M28 21.7 H17.5 M21.8 17.4 L17.5 21.7 L21.8 26"/></g></svg>
<svg class="a" style="left:2034px;top:468px;" width="28" height="28" viewBox="0 0 28 28"><circle cx="13.9" cy="14" r="10.8" fill="none" stroke="#363636" stroke-width="2"/><path d="M8.8 8.8 L19 19 M19 8.8 L8.8 19" stroke="#363636" stroke-width="2"/></svg>
<div class="a" style="left:173px;top:527px;width:75px;height:70px;background:#fff;"></div>
<div class="a" style="left:253px;top:527px;width:1825px;height:70px;background:#fff;"></div>
<div class="a" style="left:1888px;top:528px;width:5px;height:68px;background:#f6f6f6;"></div>
<svg class="a" style="left:194px;top:544px;" width="34" height="42" viewBox="0 0 34 42"><g fill="none" stroke="#686868" stroke-width="2.1" stroke-linejoin="round" stroke-linecap="butt"><path d="M16.9 3 L30.9 10.2 L16.9 17.4 L3 10.2 Z"/><path d="M11.4 6 L22.6 14.2"/><path d="M3 10.2 V25.8 L9.4 29.6 M30.9 10.2 V26 L27.6 26.4 M16.9 17.4 V25.8"/></g><text x="12.4" y="37.7" font-family="Liberation Sans" font-weight="700" font-size="11.6" fill="#686868" letter-spacing="3.4">CB</text></svg>
<div class="t" id="r2_0" style="left:268.50px;top:553.17px;font-size:19.8px;line-height:19.8px;font-weight:400;color:#000;transform:scaleX(0.9732);transform-origin:0 0;">15.07.2025 16:…</div>
<div class="t" id="r2_1" style="left:448.10px;top:553.17px;font-size:19.8px;line-height:19.8px;font-weight:700;color:#000;transform:scaleX(1.0120);transform-origin:0 0;">DO00014014</div>
<div class="t" id="r2_2" style="left:630.00px;top:553.17px;font-size:19.8px;line-height:19.8px;font-weight:400;color:#000;">-</div>
<div class="t" id="r2_3" style="left:811.70px;top:553.17px;font-size:19.8px;line-height:19.8px;font-weight:400;color:#000;transform:scaleX(0.9628);transform-origin:0 0;">Alexander Wim…</div>
<div class="t" id="r2_4" style="left:993.10px;top:553.17px;font-size:19.8px;line-height:19.8px;font-weight:400;color:#000;transform:scaleX(0.9572);transform-origin:0 0;">Alexander Wim…</div>
<div class="t" id="r2_5" style="left:1173.30px;top:553.17px;font-size:19.8px;line-height:19.8px;font-weight:400;color:#000;transform:scaleX(1.0318);transform-origin:0 0;">74100100</div>
<div class="t" id="r2_6" style="left:1354.50px;top:553.17px;font-size:19.8px;line-height:19.8px;font-weight:400;color:#000;transform:scaleX(0.8818);transform-origin:0 0;">F-EK-FAF-DZE (…</div>
<div class="t" id="r2_7" style="right:843.00px;top:553.17px;font-size:19.8px;line-height:19.8px;font-weight:400;color:#000;transform:scaleX(0.9679);transform-origin:100% 0;">0.00 CHF</div>
<div class="a" style="left:1717px;top:555px;width:15px;height:15px;border-radius:8px;background:#4f7ff0"></div>
<div class="t" id="r2_8" style="left:1737.00px;top:553.17px;font-size:19.8px;line-height:19.8px;font-weight:400;color:#000;">In Bearbeitung</div>
<svg class="a" style="left:1906px;top:553px;" width="28" height="18" viewBox="0 0 28 18"><g fill="none" stroke="#404040" stroke-width="1.9"><path d="M2.5 9H13.5 M9 4.2 L13.8 9 L9 13.8"/><path d="M15.5 2.4H26 M18 9H26 M15.5 15.6H26"/></g></svg>
<svg class="a" style="left:1968px;top:548px;" width="32" height="28" viewBox="0 0 32 28"><g fill="none" stroke="#8a8a8a" stroke-width="1.6" stroke-linejoin="round"><path d="M13.5 1.5 L24.5 6 L13.5 10.5 L2.5 6 Z"/><path d="M2.5 6 V17.5 L13.5 22.5 V10.5 M24.5 6 V13.5"/><path d="M28 21.7 H17.5 M21.8 17.4 L17.5 21.7 L21.8 26"/></g></svg>
<svg class="a" style="left:2034px;top:548px;" width="28" height="28" viewBox="0 0 28 28"><circle cx="13.9" cy="14" r="10.8" fill="none" stroke="#363636" stroke-width="2"/><path d="M8.8 8.8 L19 19 M19 8.8 L8.8 19" stroke="#363636" stroke-width="2"/></svg>
<div class="a" style="left:173px;top:607px;width:75px;height:70px;background:#fff;"></div>
<div class="a" style="left:253px;top:607px;width:1825px;height:70px;background:#fff;"></div>
<div class="a" style="left:1888px;top:608px;width:5px;height:68px;background:#f6f6f6;"></div>
<svg class="a" style="left:194px;top:624px;" width="34" height="42" viewBox="0 0 34 42"><g fill="none" stroke="#686868" stroke-width="2.1" stroke-linejoin="round" stroke-linecap="butt"><path d="M16.9 3 L30.9 10.2 L16.9 17.4 L3 10.2 Z"/><path d="M11.4 6 L22.6 14.2"/><path d="M3 10.2 V25.8 L9.4 29.6 M30.9 10.2 V26 L27.6 26.4 M16.9 17.4 V25.8"/></g><text x="12.4" y="37.7" font-family="Liberation Sans" font-weight="700" font-size="11.6" fill="#686868" letter-spacing="3.4">CB</text></svg>
<div class="t" id="r3_0" style="left:268.50px;top:633.17px;font-size:19.8px;line-height:19.8px;font-weight:400;color:#000;transform:scaleX(0.9732);transform-origin:0 0;">16.07.2025 14:…</div>
<div class="t" id="r3_1" style="left:448.10px;top:633.17px;font-size:19.8px;line-height:19.8px;font-weight:700;color:#000;transform:scaleX(1.0121);transform-origin:0 0;">DO00014056</div>
<div class="t" id="r3_2" style="left:630.00px;top:633.17px;font-size:19.8px;line-height:19.8px;font-weight:400;color:#000;">-</div>
<div class="t" id="r3_3" style="left:810.70px;top:633.17px;font-size:19.8px;line-height:19.8px;font-weight:400;color:#000;transform:scaleX(0.9609);transform-origin:0 0;">Esther Fehlman…</div>
<div class="t" id="r3_4" style="left:993.10px;top:633.17px;font-size:19.8px;line-height:19.8px;font-weight:400;color:#000;transform:scaleX(0.9387);transform-origin:0 0;">Veli Sezer (U24…</div>
<div class="t" id="r3_5" style="left:1173.30px;top:633.17px;font-size:19.8px;line-height:19.8px;font-weight:400;color:#000;transform:scaleX(1.0317);transform-origin:0 0;">84850640</div>
<div class="t" id="r3_6" style="left:1354.50px;top:633.17px;font-size:19.8px;line-height:19.8px;font-weight:400;color:#000;transform:scaleX(0.8857);transform-origin:0 0;">I-ESP-BTC-PRB-…</div>
<div class="t" id="r3_7" style="right:843.00px;top:633.17px;font-size:19.8px;line-height:19.8px;font-weight:400;color:#000;transform:scaleX(0.9679);transform-origin:100% 0;">0.00 CHF</div>
<div class="a" style="left:1717px;top:635px;width:15px;height:15px;border-radius:8px;background:#4f7ff0"></div>
<div class="t" id="r3_8" style="left:1737.00px;top:633.17px;font-size:19.8px;line-height:19.8px;font-weight:400;color:#000;">In Bearbeitung</div>
<svg class="a" style="left:1906px;top:633px;" width="28" height="18" viewBox="0 0 28 18"><g fill="none" stroke="#404040" stroke-width="1.9"><path d="M2.5 9H13.5 M9 4.2 L13.8 9 L9 13.8"/><path d="M15.5 2.4H26 M18 9H26 M15.5 15.6H26"/></g></svg>
<svg class="a" style="left:1968px;top:628px;" width="32" height="28" viewBox="0 0 32 28"><g fill="none" stroke="#8a8a8a" stroke-width="1.6" stroke-linejoin="round"><path d="M13.5 1.5 L24.5 6 L13.5 10.5 L2.5 6 Z"/><path d="M2.5 6 V17.5 L13.5 22.5 V10.5 M24.5 6 V13.5"/><path d="M28 21.7 H17.5 M21.8 17.4 L17.5 21.7 L21.8 26"/></g></svg>
<svg class="a" style="left:2034px;top:628px;" width="28" height="28" viewBox="0 0 28 28"><circle cx="13.9" cy="14" r="10.8" fill="none" stroke="#363636" stroke-width="2"/><path d="M8.8 8.8 L19 19 M19 8.8 L8.8 19" stroke="#363636" stroke-width="2"/></svg>
<div class="a" style="left:173px;top:687px;width:75px;height:70px;background:#fff;"></div>
<div class="a" style="left:253px;top:687px;width:1825px;height:70px;background:#fff;"></div>
<div class="a" style="left:1888px;top:688px;width:5px;height:68px;background:#f6f6f6;"></div>
<svg class="a" style="left:194px;top:704px;" width="34" height="42" viewBox="0 0 34 42"><g fill="none" stroke="#686868" stroke-width="2.1" stroke-linejoin="round" stroke-linecap="butt"><path d="M16.9 3 L30.9 10.2 L16.9 17.4 L3 10.2 Z"/><path d="M11.4 6 L22.6 14.2"/><path d="M3 10.2 V25.8 L9.4 29.6 M30.9 10.2 V26 L27.6 26.4 M16.9 17.4 V25.8"/></g><text x="12.4" y="37.7" font-family="Liberation Sans" font-weight="700" font-size="11.6" fill="#686868" letter-spacing="3.4">CB</text></svg>
<div class="t" id="r4_0" style="left:268.50px;top:713.17px;font-size:19.8px;line-height:19.8px;font-weight:400;color:#000;transform:scaleX(0.9732);transform-origin:0 0;">16.07.2025 14:…</div>
<div class="t" id="r4_1" style="left:448.10px;top:713.17px;font-size:19.8px;line-height:19.8px;font-weight:700;color:#000;transform:scaleX(1.0204);transform-origin:0 0;">DO00014057</div>
<div class="t" id="r4_2" style="left:630.00px;top:713.17px;font-size:19.8px;line-height:19.8px;font-weight:400;color:#000;">-</div>
<div class="t" id="r4_3" style="left:810.70px;top:713.17px;font-size:19.8px;line-height:19.8px;font-weight:400;color:#000;transform:scaleX(0.9560);transform-origin:0 0;">Petra Bürki (U2…</div>
<div class="t" id="r4_4" style="left:992.10px;top:713.17px;font-size:19.8px;line-height:19.8px;font-weight:400;color:#000;transform:scaleX(0.9495);transform-origin:0 0;">Bruno Spiess (U…</div>
<div class="t" id="r4_5" style="left:1173.30px;top:713.17px;font-size:19.8px;line-height:19.8px;font-weight:400;color:#000;transform:scaleX(1.0317);transform-origin:0 0;">84850451</div>
<div class="t" id="r4_6" style="left:1354.50px;top:713.17px;font-size:19.8px;line-height:19.8px;font-weight:400;color:#000;transform:scaleX(0.8857);transform-origin:0 0;">I-ESP-BTC-PRB-…</div>
<div class="t" id="r4_7" style="right:843.00px;top:713.17px;font-size:19.8px;line-height:19.8px;font-weight:400;color:#000;transform:scaleX(0.9679);transform-origin:100% 0;">0.00 CHF</div>
<div class="a" style="left:1717px;top:715px;width:15px;height:15px;border-radius:8px;background:#4f7ff0"></div>
<div class="t" id="r4_8" style="left:1737.00px;top:713.17px;font-size:19.8px;line-height:19.8px;font-weight:400;color:#000;">In Bearbeitung</div>
<svg class="a" style="left:1906px;top:713px;" width="28" height="18" viewBox="0 0 28 18"><g fill="none" stroke="#404040" stroke-width="1.9"><path d="M2.5 9H13.5 M9 4.2 L13.8 9 L9 13.8"/><path d="M15.5 2.4H26 M18 9H26 M15.5 15.6H26"/></g></svg>
<svg class="a" style="left:1968px;top:708px;" width="32" height="28" viewBox="0 0 32 28"><g fill="none" stroke="#8a8a8a" stroke-width="1.6" stroke-linejoin="round"><path d="M13.5 1.5 L24.5 6 L13.5 10.5 L2.5 6 Z"/><path d="M2.5 6 V17.5 L13.5 22.5 V10.5 M24.5 6 V13.5"/><path d="M28 21.7 H17.5 M21.8 17.4 L17.5 21.7 L21.8 26"/></g></svg>
<svg class="a" style="left:2034px;top:708px;" width="28" height="28" viewBox="0 0 28 28"><circle cx="13.9" cy="14" r="10.8" fill="none" stroke="#363636" stroke-width="2"/><path d="M8.8 8.8 L19 19 M19 8.8 L8.8 19" stroke="#363636" stroke-width="2"/></svg>
<div class="a" style="left:173px;top:767px;width:75px;height:70px;background:#fff;"></div>
<div class="a" style="left:253px;top:767px;width:1825px;height:70px;background:#fff;"></div>
<div class="a" style="left:1888px;top:768px;width:5px;height:68px;background:#f6f6f6;"></div>
<svg class="a" style="left:194px;top:784px;" width="34" height="42" viewBox="0 0 34 42"><g fill="none" stroke="#686868" stroke-width="2.1" stroke-linejoin="round" stroke-linecap="butt"><path d="M16.9 3 L30.9 10.2 L16.9 17.4 L3 10.2 Z"/><path d="M11.4 6 L22.6 14.2"/><path d="M3 10.2 V25.8 L9.4 29.6 M30.9 10.2 V26 L27.6 26.4 M16.9 17.4 V25.8"/></g><text x="12.4" y="37.7" font-family="Liberation Sans" font-weight="700" font-size="11.6" fill="#686868" letter-spacing="3.4">CB</text></svg>
<div class="t" id="r5_0" style="left:268.50px;top:793.17px;font-size:19.8px;line-height:19.8px;font-weight:400;color:#000;transform:scaleX(0.9732);transform-origin:0 0;">16.07.2025 14:…</div>
<div class="t" id="r5_1" style="left:448.10px;top:793.17px;font-size:19.8px;line-height:19.8px;font-weight:700;color:#000;transform:scaleX(1.0120);transform-origin:0 0;">DO00014058</div>
<div class="t" id="r5_2" style="left:630.00px;top:793.17px;font-size:19.8px;line-height:19.8px;font-weight:400;color:#000;">-</div>
<div class="t" id="r5_3" style="left:810.70px;top:793.17px;font-size:19.8px;line-height:19.8px;font-weight:400;color:#000;transform:scaleX(0.9609);transform-origin:0 0;">Esther Fehlman…</div>
<div class="t" id="r5_4" style="left:992.10px;top:793.17px;font-size:19.8px;line-height:19.8px;font-weight:400;color:#000;transform:scaleX(0.9610);transform-origin:0 0;">Nadya Marty (U…</div>
<div class="t" id="r5_5" style="left:1173.30px;top:793.17px;font-size:19.8px;line-height:19.8px;font-weight:400;color:#000;transform:scaleX(1.0317);transform-origin:0 0;">84850630</div>
<div class="t" id="r5_6" style="left:1354.50px;top:793.17px;font-size:19.8px;line-height:19.8px;font-weight:400;color:#000;transform:scaleX(0.8857);transform-origin:0 0;">I-ESP-BTC-PRB-…</div>
<div class="t" id="r5_7" style="right:843.00px;top:793.17px;font-size:19.8px;line-height:19.8px;font-weight:400;color:#000;transform:scaleX(0.9679);transform-origin:100% 0;">0.00 CHF</div>
<div class="a" style="left:1717px;top:795px;width:15px;height:15px;border-radius:8px;background:#4f7ff0"></div>
<div class="t" id="r5_8" style="left:1737.00px;top:793.17px;font-size:19.8px;line-height:19.8px;font-weight:400;color:#000;">In Bearbeitung</div>
<svg class="a" style="left:1906px;top:793px;" width="28" height="18" viewBox="0 0 28 18"><g fill="none" stroke="#404040" stroke-width="1.9"><path d="M2.5 9H13.5 M9 4.2 L13.8 9 L9 13.8"/><path d="M15.5 2.4H26 M18 9H26 M15.5 15.6H26"/></g></svg>
<svg class="a" style="left:1968px;top:788px;" width="32" height="28" viewBox="0 0 32 28"><g fill="none" stroke="#8a8a8a" stroke-width="1.6" stroke-linejoin="round"><path d="M13.5 1.5 L24.5 6 L13.5 10.5 L2.5 6 Z"/><path d="M2.5 6 V17.5 L13.5 22.5 V10.5 M24.5 6 V13.5"/><path d="M28 21.7 H17.5 M21.8 17.4 L17.5 21.7 L21.8 26"/></g></svg>
<svg class="a" style="left:2034px;top:788px;" width="28" height="28" viewBox="0 0 28 28"><circle cx="13.9" cy="14" r="10.8" fill="none" stroke="#363636" stroke-width="2"/><path d="M8.8 8.8 L19 19 M19 8.8 L8.8 19" stroke="#363636" stroke-width="2"/></svg>
<div class="a" style="left:173px;top:847px;width:75px;height:70px;background:#fff;"></div>
<div class="a" style="left:253px;top:847px;width:1825px;height:70px;background:#fff;"></div>
<div class="a" style="left:1888px;top:848px;width:5px;height:68px;background:#f6f6f6;"></div>
<svg class="a" style="left:194px;top:864px;" width="34" height="42" viewBox="0 0 34 42"><g fill="none" stroke="#686868" stroke-width="2.1" stroke-linejoin="round" stroke-linecap="butt"><path d="M16.9 3 L30.9 10.2 L16.9 17.4 L3 10.2 Z"/><path d="M11.4 6 L22.6 14.2"/><path d="M3 10.2 V25.8 L9.4 29.6 M30.9 10.2 V26 L27.6 26.4 M16.9 17.4 V25.8"/></g><text x="12.4" y="37.7" font-family="Liberation Sans" font-weight="700" font-size="11.6" fill="#686868" letter-spacing="3.4">CB</text></svg>
<div class="t" id="r6_0" style="left:268.50px;top:873.17px;font-size:19.8px;line-height:19.8px;font-weight:400;color:#000;transform:scaleX(0.9732);transform-origin:0 0;">17.07.2025 09:…</div>
<div class="t" id="r6_1" style="left:448.10px;top:873.17px;font-size:19.8px;line-height:19.8px;font-weight:700;color:#000;transform:scaleX(1.0204);transform-origin:0 0;">DO00014077</div>
<div class="t" id="r6_2" style="left:630.00px;top:873.17px;font-size:19.8px;line-height:19.8px;font-weight:400;color:#000;">-</div>
<div class="t" id="r6_3" style="left:810.70px;top:873.17px;font-size:19.8px;line-height:19.8px;font-weight:400;color:#000;transform:scaleX(0.9569);transform-origin:0 0;">Olivier Serdaou…</div>
<div class="t" id="r6_4" style="left:992.10px;top:873.17px;font-size:19.8px;line-height:19.8px;font-weight:400;color:#000;transform:scaleX(0.9513);transform-origin:0 0;">Olivier Serdaou…</div>
<div class="t" id="r6_5" style="left:1173.30px;top:873.17px;font-size:19.8px;line-height:19.8px;font-weight:400;color:#000;transform:scaleX(1.0317);transform-origin:0 0;">34531323</div>
<div class="t" id="r6_6" style="left:1354.50px;top:873.17px;font-size:19.8px;line-height:19.8px;font-weight:400;color:#000;transform:scaleX(0.9064);transform-origin:0 0;">PP-UHR-KOMP-…</div>
<div class="t" id="r6_7" style="right:843.00px;top:873.17px;font-size:19.8px;line-height:19.8px;font-weight:400;color:#000;transform:scaleX(0.9679);transform-origin:100% 0;">0.00 CHF</div>
<div class="a" style="left:1717px;top:875px;width:15px;height:15px;border-radius:8px;background:#4f7ff0"></div>
<div class="t" id="r6_8" style="left:1737.00px;top:873.17px;font-size:19.8px;line-height:19.8px;font-weight:400;color:#000;">In Bearbeitung</div>
<svg class="a" style="left:1906px;top:873px;" width="28" height="18" viewBox="0 0 28 18"><g fill="none" stroke="#404040" stroke-width="1.9"><path d="M2.5 9H13.5 M9 4.2 L13.8 9 L9 13.8"/><path d="M15.5 2.4H26 M18 9H26 M15.5 15.6H26"/></g></svg>
<svg class="a" style="left:1968px;top:868px;" width="32" height="28" viewBox="0 0 32 28"><g fill="none" stroke="#8a8a8a" stroke-width="1.6" stroke-linejoin="round"><path d="M13.5 1.5 L24.5 6 L13.5 10.5 L2.5 6 Z"/><path d="M2.5 6 V17.5 L13.5 22.5 V10.5 M24.5 6 V13.5"/><path d="M28 21.7 H17.5 M21.8 17.4 L17.5 21.7 L21.8 26"/></g></svg>
<svg class="a" style="left:2034px;top:868px;" width="28" height="28" viewBox="0 0 28 28"><circle cx="13.9" cy="14" r="10.8" fill="none" stroke="#363636" stroke-width="2"/><path d="M8.8 8.8 L19 19 M19 8.8 L8.8 19" stroke="#363636" stroke-width="2"/></svg>
<div class="a" style="left:173px;top:927px;width:75px;height:70px;background:#fff;"></div>
<div class="a" style="left:253px;top:927px;width:1825px;height:70px;background:#fff;"></div>
<div class="a" style="left:1888px;top:928px;width:5px;height:68px;background:#f6f6f6;"></div>
<svg class="a" style="left:194px;top:944px;" width="34" height="42" viewBox="0 0 34 42"><g fill="none" stroke="#686868" stroke-width="2.1" stroke-linejoin="round" stroke-linecap="butt"><path d="M16.9 3 L30.9 10.2 L16.9 17.4 L3 10.2 Z"/><path d="M11.4 6 L22.6 14.2"/><path d="M3 10.2 V25.8 L9.4 29.6 M30.9 10.2 V26 L27.6 26.4 M16.9 17.4 V25.8"/></g><text x="12.4" y="37.7" font-family="Liberation Sans" font-weight="700" font-size="11.6" fill="#686868" letter-spacing="3.4">CB</text></svg>
<div class="t" id="r7_0" style="left:268.50px;top:953.17px;font-size:19.8px;line-height:19.8px;font-weight:400;color:#000;transform:scaleX(0.9732);transform-origin:0 0;">26.05.2025 13:…</div>
<div class="t" id="r7_1" style="left:448.10px;top:953.17px;font-size:19.8px;line-height:19.8px;font-weight:700;color:#000;transform:scaleX(1.0120);transform-origin:0 0;">DO00012945</div>
<div class="t" id="r7_2" style="left:630.00px;top:953.17px;font-size:19.8px;line-height:19.8px;font-weight:400;color:#000;">-</div>
<div class="t" id="r7_3" style="left:810.70px;top:953.17px;font-size:19.8px;line-height:19.8px;font-weight:400;color:#000;transform:scaleX(0.9476);transform-origin:0 0;">Reinhard Eggen…</div>
<div class="t" id="r7_4" style="left:992.10px;top:953.17px;font-size:19.8px;line-height:19.8px;font-weight:400;color:#000;transform:scaleX(0.9422);transform-origin:0 0;">Reinhard Eggen…</div>
<div class="t" id="r7_5" style="left:1173.30px;top:953.17px;font-size:19.8px;line-height:19.8px;font-weight:400;color:#000;transform:scaleX(1.0317);transform-origin:0 0;">84850415</div>
<div class="t" id="r7_6" style="left:1354.50px;top:953.17px;font-size:19.8px;line-height:19.8px;font-weight:400;color:#000;transform:scaleX(0.8855);transform-origin:0 0;">I-ESP-BTC-ZLO-…</div>
<div class="t" id="r7_7" style="right:843.00px;top:953.17px;font-size:19.8px;line-height:19.8px;font-weight:400;color:#000;transform:scaleX(0.9680);transform-origin:100% 0;">3.85 CHF</div>
<div class="a" style="left:1717px;top:955px;width:15px;height:15px;border-radius:8px;background:#4f7ff0"></div>
<div class="t" id="r7_8" style="left:1737.00px;top:953.17px;font-size:19.8px;line-height:19.8px;font-weight:400;color:#000;">In Bearbeitung</div>
<svg class="a" style="left:1906px;top:953px;" width="28" height="18" viewBox="0 0 28 18"><g fill="none" stroke="#404040" stroke-width="1.9"><path d="M2.5 9H13.5 M9 4.2 L13.8 9 L9 13.8"/><path d="M15.5 2.4H26 M18 9H26 M15.5 15.6H26"/></g></svg>
<svg class="a" style="left:1968px;top:948px;" width="32" height="28" viewBox="0 0 32 28"><g fill="none" stroke="#8a8a8a" stroke-width="1.6" stroke-linejoin="round"><path d="M13.5 1.5 L24.5 6 L13.5 10.5 L2.5 6 Z"/><path d="M2.5 6 V17.5 L13.5 22.5 V10.5 M24.5 6 V13.5"/><path d="M28 21.7 H17.5 M21.8 17.4 L17.5 21.7 L21.8 26"/></g></svg>
<svg class="a" style="left:2034px;top:948px;" width="28" height="28" viewBox="0 0 28 28"><circle cx="13.9" cy="14" r="10.8" fill="none" stroke="#363636" stroke-width="2"/><path d="M8.8 8.8 L19 19 M19 8.8 L8.8 19" stroke="#363636" stroke-width="2"/></svg>
<div class="a" style="left:173px;top:1007px;width:75px;height:70px;background:#fff;"></div>
<div class="a" style="left:253px;top:1007px;width:1825px;height:70px;background:#fff;"></div>
<div class="a" style="left:1888px;top:1008px;width:5px;height:68px;background:#f6f6f6;"></div>
<svg class="a" style="left:194px;top:1024px;" width="34" height="42" viewBox="0 0 34 42"><g fill="none" stroke="#686868" stroke-width="2.1" stroke-linejoin="round" stroke-linecap="butt"><path d="M16.9 3 L30.9 10.2 L16.9 17.4 L3 10.2 Z"/><path d="M11.4 6 L22.6 14.2"/><path d="M3 10.2 V25.8 L9.4 29.6 M30.9 10.2 V26 L27.6 26.4 M16.9 17.4 V25.8"/></g><text x="12.4" y="37.7" font-family="Liberation Sans" font-weight="700" font-size="11.6" fill="#686868" letter-spacing="3.4">CB</text></svg>
<div class="t" id="r8_0" style="left:268.50px;top:1033.17px;font-size:19.8px;line-height:19.8px;font-weight:400;color:#000;transform:scaleX(0.9732);transform-origin:0 0;">24.07.2024 13:…</div>
<div class="t" id="r8_1" style="left:448.10px;top:1033.17px;font-size:19.8px;line-height:19.8px;font-weight:700;color:#000;transform:scaleX(1.0121);transform-origin:0 0;">DO00008016</div>
<div class="t" id="r8_2" style="left:630.00px;top:1033.17px;font-size:19.8px;line-height:19.8px;font-weight:400;color:#000;">-</div>
<div class="t" id="r8_3" style="left:810.70px;top:1033.17px;font-size:19.8px;line-height:19.8px;font-weight:400;color:#000;transform:scaleX(0.9646);transform-origin:0 0;">Engelbert Inder…</div>
<div class="t" id="r8_4" style="left:992.10px;top:1033.17px;font-size:19.8px;line-height:19.8px;font-weight:400;color:#000;transform:scaleX(0.9658);transform-origin:0 0;">Engelbert Inder…</div>
<div class="t" id="r8_5" style="left:1173.30px;top:1033.17px;font-size:19.8px;line-height:19.8px;font-weight:400;color:#000;transform:scaleX(1.0318);transform-origin:0 0;">63100200</div>
<div class="t" id="r8_6" style="left:1354.50px;top:1033.17px;font-size:19.8px;line-height:19.8px;font-weight:400;color:#000;transform:scaleX(0.9318);transform-origin:0 0;">I-AEP-PJM-PNM…</div>
<div class="t" id="r8_7" style="right:843.00px;top:1033.17px;font-size:19.8px;line-height:19.8px;font-weight:400;color:#000;transform:scaleX(0.9680);transform-origin:100% 0;">3.96 CHF</div>
<div class="a" style="left:1717px;top:1035px;width:15px;height:15px;border-radius:8px;background:#4f7ff0"></div>
<div class="t" id="r8_8" style="left:1737.00px;top:1033.17px;font-size:19.8px;line-height:19.8px;font-weight:400;color:#000;">In Bearbeitung</div>
<svg class="a" style="left:1906px;top:1033px;" width="28" height="18" viewBox="0 0 28 18"><g fill="none" stroke="#404040" stroke-width="1.9"><path d="M2.5 9H13.5 M9 4.2 L13.8 9 L9 13.8"/><path d="M15.5 2.4H26 M18 9H26 M15.5 15.6H26"/></g></svg>
<svg class="a" style="left:1968px;top:1028px;" width="32" height="28" viewBox="0 0 32 28"><g fill="none" stroke="#8a8a8a" stroke-width="1.6" stroke-linejoin="round"><path d="M13.5 1.5 L24.5 6 L13.5 10.5 L2.5 6 Z"/><path d="M2.5 6 V17.5 L13.5 22.5 V10.5 M24.5 6 V13.5"/><path d="M28 21.7 H17.5 M21.8 17.4 L17.5 21.7 L21.8 26"/></g></svg>
<svg class="a" style="left:2034px;top:1028px;" width="28" height="28" viewBox="0 0 28 28"><circle cx="13.9" cy="14" r="10.8" fill="none" stroke="#363636" stroke-width="2"/><path d="M8.8 8.8 L19 19 M19 8.8 L8.8 19" stroke="#363636" stroke-width="2"/></svg>
<div class="a" style="left:173px;top:1087px;width:75px;height:70px;background:#fff;"></div>
<div class="a" style="left:253px;top:1087px;width:1825px;height:70px;background:#fff;"></div>
<div class="a" style="left:1888px;top:1088px;width:5px;height:68px;background:#f6f6f6;"></div>
<svg class="a" style="left:194px;top:1104px;" width="34" height="42" viewBox="0 0 34 42"><g fill="none" stroke="#686868" stroke-width="2.1" stroke-linejoin="round" stroke-linecap="butt"><path d="M16.9 3 L30.9 10.2 L16.9 17.4 L3 10.2 Z"/><path d="M11.4 6 L22.6 14.2"/><path d="M3 10.2 V25.8 L9.4 29.6 M30.9 10.2 V26 L27.6 26.4 M16.9 17.4 V25.8"/></g><text x="12.4" y="37.7" font-family="Liberation Sans" font-weight="700" font-size="11.6" fill="#686868" letter-spacing="3.4">RO</text></svg>
<div class="t" id="r9_0" style="left:268.50px;top:1113.17px;font-size:19.8px;line-height:19.8px;font-weight:400;color:#000;transform:scaleX(0.9732);transform-origin:0 0;">17.07.2023 15:…</div>
<div class="t" id="r9_1" style="left:448.10px;top:1113.17px;font-size:19.8px;line-height:19.8px;font-weight:700;color:#000;transform:scaleX(1.0120);transform-origin:0 0;">DO00001854</div>
<div class="t" id="r9_2" style="left:630.00px;top:1113.17px;font-size:19.8px;line-height:19.8px;font-weight:400;color:#000;">-</div>
<div class="t" id="r9_4" style="left:993.10px;top:1113.17px;font-size:19.8px;line-height:19.8px;font-weight:400;color:#000;transform:scaleX(0.9551);transform-origin:0 0;">Alexandre Sous…</div>
<div class="t" id="r9_5" style="left:1173.30px;top:1113.17px;font-size:19.8px;line-height:19.8px;font-weight:400;color:#000;transform:scaleX(1.0294);transform-origin:0 0;">5206022856</div>
<div class="t" id="r9_6" style="left:1354.50px;top:1113.17px;font-size:19.8px;line-height:19.8px;font-weight:400;color:#000;transform:scaleX(0.8783);transform-origin:0 0;">I-ESP-LOG-RME-…</div>
<div class="t" id="r9_7" style="right:843.00px;top:1113.17px;font-size:19.8px;line-height:19.8px;font-weight:400;color:#000;transform:scaleX(0.9685);transform-origin:100% 0;">4.35 CHF</div>
<div class="a" style="left:1717px;top:1115px;width:15px;height:15px;border-radius:8px;background:#4f7ff0"></div>
<div class="t" id="r9_8" style="left:1737.00px;top:1113.17px;font-size:19.8px;line-height:19.8px;font-weight:400;color:#000;">In Bearbeitung</div>
<svg class="a" style="left:1906px;top:1113px;" width="28" height="18" viewBox="0 0 28 18"><g fill="none" stroke="#404040" stroke-width="1.9"><path d="M2.5 9H13.5 M9 4.2 L13.8 9 L9 13.8"/><path d="M15.5 2.4H26 M18 9H26 M15.5 15.6H26"/></g></svg>
<svg class="a" style="left:1968px;top:1108px;" width="32" height="28" viewBox="0 0 32 28"><g fill="none" stroke="#8a8a8a" stroke-width="1.6" stroke-linejoin="round"><path d="M13.5 1.5 L24.5 6 L13.5 10.5 L2.5 6 Z"/><path d="M2.5 6 V17.5 L13.5 22.5 V10.5 M24.5 6 V13.5"/><path d="M28 21.7 H17.5 M21.8 17.4 L17.5 21.7 L21.8 26"/></g></svg>
<svg class="a" style="left:2034px;top:1108px;" width="28" height="28" viewBox="0 0 28 28"><circle cx="13.9" cy="14" r="10.8" fill="none" stroke="#363636" stroke-width="2"/><path d="M8.8 8.8 L19 19 M19 8.8 L8.8 19" stroke="#363636" stroke-width="2"/></svg>
<div class="a" style="left:173px;top:1167px;width:75px;height:70px;background:#fff;"></div>
<div class="a" style="left:253px;top:1167px;width:1825px;height:70px;background:#fff;"></div>
<div class="a" style="left:1888px;top:1168px;width:5px;height:68px;background:#f6f6f6;"></div>
<svg class="a" style="left:194px;top:1184px;" width="34" height="42" viewBox="0 0 34 42"><g fill="none" stroke="#686868" stroke-width="2.1" stroke-linejoin="round" stroke-linecap="butt"><path d="M16.9 3 L30.9 10.2 L16.9 17.4 L3 10.2 Z"/><path d="M11.4 6 L22.6 14.2"/><path d="M3 10.2 V25.8 L9.4 29.6 M30.9 10.2 V26 L27.6 26.4 M16.9 17.4 V25.8"/></g><text x="12.4" y="37.7" font-family="Liberation Sans" font-weight="700" font-size="11.6" fill="#686868" letter-spacing="3.4">CB</text></svg>
<div class="t" id="r10_0" style="left:268.50px;top:1193.17px;font-size:19.8px;line-height:19.8px;font-weight:400;color:#000;transform:scaleX(0.9732);transform-origin:0 0;">25.06.2025 07:…</div>
<div class="t" id="r10_1" style="left:448.10px;top:1193.17px;font-size:19.8px;line-height:19.8px;font-weight:700;color:#000;transform:scaleX(1.0204);transform-origin:0 0;">DO00013577</div>
<div class="t" id="r10_2" style="left:630.00px;top:1193.17px;font-size:19.8px;line-height:19.8px;font-weight:400;color:#000;">-</div>
<div class="t" id="r10_3" style="left:811.70px;top:1193.17px;font-size:19.8px;line-height:19.8px;font-weight:400;color:#000;transform:scaleX(0.9655);transform-origin:0 0;">Thomas Schule…</div>
<div class="t" id="r10_4" style="left:993.10px;top:1193.17px;font-size:19.8px;line-height:19.8px;font-weight:400;color:#000;transform:scaleX(0.9610);transform-origin:0 0;">Thomas Schule…</div>
<div class="t" id="r10_5" style="left:1173.30px;top:1193.17px;font-size:19.8px;line-height:19.8px;font-weight:400;color:#000;transform:scaleX(1.0318);transform-origin:0 0;">54502770</div>
<div class="t" id="r10_6" style="left:1354.50px;top:1193.17px;font-size:19.8px;line-height:19.8px;font-weight:400;color:#000;transform:scaleX(0.8783);transform-origin:0 0;">I-FUB-INT-RSD-E…</div>
<div class="t" id="r10_7" style="right:843.00px;top:1193.17px;font-size:19.8px;line-height:19.8px;font-weight:400;color:#000;transform:scaleX(0.9685);transform-origin:100% 0;">4.70 CHF</div>
<div class="a" style="left:1717px;top:1195px;width:15px;height:15px;border-radius:8px;background:#4f7ff0"></div>
<div class="t" id="r10_8" style="left:1737.00px;top:1193.17px;font-size:19.8px;line-height:19.8px;font-weight:400;color:#000;">In Bearbeitung</div>
<svg class="a" style="left:1906px;top:1193px;" width="28" height="18" viewBox="0 0 28 18"><g fill="none" stroke="#404040" stroke-width="1.9"><path d="M2.5 9H13.5 M9 4.2 L13.8 9 L9 13.8"/><path d="M15.5 2.4H26 M18 9H26 M15.5 15.6H26"/></g></svg>
<svg class="a" style="left:1968px;top:1188px;" width="32" height="28" viewBox="0 0 32 28"><g fill="none" stroke="#8a8a8a" stroke-width="1.6" stroke-linejoin="round"><path d="M13.5 1.5 L24.5 6 L13.5 10.5 L2.5 6 Z"/><path d="M2.5 6 V17.5 L13.5 22.5 V10.5 M24.5 6 V13.5"/><path d="M28 21.7 H17.5 M21.8 17.4 L17.5 21.7 L21.8 26"/></g></svg>
<svg class="a" style="left:2034px;top:1188px;" width="28" height="28" viewBox="0 0 28 28"><circle cx="13.9" cy="14" r="10.8" fill="none" stroke="#363636" stroke-width="2"/><path d="M8.8 8.8 L19 19 M19 8.8 L8.8 19" stroke="#363636" stroke-width="2"/></svg>
<div class="a" style="left:173px;top:1247px;width:75px;height:70px;background:#fff;"></div>
<div class="a" style="left:253px;top:1247px;width:1825px;height:70px;background:#fff;"></div>
<div class="a" style="left:1888px;top:1248px;width:5px;height:68px;background:#f6f6f6;"></div>
<svg class="a" style="left:194px;top:1264px;" width="34" height="42" viewBox="0 0 34 42"><g fill="none" stroke="#686868" stroke-width="2.1" stroke-linejoin="round" stroke-linecap="butt"><path d="M16.9 3 L30.9 10.2 L16.9 17.4 L3 10.2 Z"/><path d="M11.4 6 L22.6 14.2"/><path d="M3 10.2 V25.8 L9.4 29.6 M30.9 10.2 V26 L27.6 26.4 M16.9 17.4 V25.8"/></g><text x="12.4" y="37.7" font-family="Liberation Sans" font-weight="700" font-size="11.6" fill="#686868" letter-spacing="3.4">RO</text></svg>
<div class="t" id="r11_0" style="left:268.50px;top:1273.17px;font-size:19.8px;line-height:19.8px;font-weight:400;color:#000;transform:scaleX(0.9732);transform-origin:0 0;">20.07.2023 15:…</div>
<div class="t" id="r11_1" style="left:448.10px;top:1273.17px;font-size:19.8px;line-height:19.8px;font-weight:700;color:#000;transform:scaleX(1.0204);transform-origin:0 0;">DO00001922</div>
<div class="t" id="r11_2" style="left:630.00px;top:1273.17px;font-size:19.8px;line-height:19.8px;font-weight:400;color:#000;">-</div>
<div class="t" id="r11_4" style="left:992.10px;top:1273.17px;font-size:19.8px;line-height:19.8px;font-weight:400;color:#000;transform:scaleX(0.9533);transform-origin:0 0;">Hugo Rubin (U1…</div>
<div class="t" id="r11_5" style="left:1173.30px;top:1273.17px;font-size:19.8px;line-height:19.8px;font-weight:400;color:#000;transform:scaleX(1.0409);transform-origin:0 0;">100116401</div>
<div class="t" id="r11_6" style="left:1354.50px;top:1273.17px;font-size:19.8px;line-height:19.8px;font-weight:400;color:#000;transform:scaleX(0.9045);transform-origin:0 0;">PP-UHR-WYO-M…</div>
<div class="t" id="r11_7" style="right:843.00px;top:1273.17px;font-size:19.8px;line-height:19.8px;font-weight:400;color:#000;transform:scaleX(0.9685);transform-origin:100% 0;">4.85 CHF</div>
<div class="a" style="left:1717px;top:1275px;width:15px;height:15px;border-radius:8px;background:#4f7ff0"></div>
<div class="t" id="r11_8" style="left:1737.00px;top:1273.17px;font-size:19.8px;line-height:19.8px;font-weight:400;color:#000;">In Bearbeitung</div>
<svg class="a" style="left:1906px;top:1273px;" width="28" height="18" viewBox="0 0 28 18"><g fill="none" stroke="#404040" stroke-width="1.9"><path d="M2.5 9H13.5 M9 4.2 L13.8 9 L9 13.8"/><path d="M15.5 2.4H26 M18 9H26 M15.5 15.6H26"/></g></svg>
<svg class="a" style="left:1968px;top:1268px;" width="32" height="28" viewBox="0 0 32 28"><g fill="none" stroke="#8a8a8a" stroke-width="1.6" stroke-linejoin="round"><path d="M13.5 1.5 L24.5 6 L13.5 10.5 L2.5 6 Z"/><path d="M2.5 6 V17.5 L13.5 22.5 V10.5 M24.5 6 V13.5"/><path d="M28 21.7 H17.5 M21.8 17.4 L17.5 21.7 L21.8 26"/></g></svg>
<svg class="a" style="left:2034px;top:1268px;" width="28" height="28" viewBox="0 0 28 28"><circle cx="13.9" cy="14" r="10.8" fill="none" stroke="#363636" stroke-width="2"/><path d="M8.8 8.8 L19 19 M19 8.8 L8.8 19" stroke="#363636" stroke-width="2"/></svg>
</div>
<svg class="a" style="left:2082px;top:369px;" width="11" height="9" viewBox="0 0 11 9"><path d="M1.3 7.7 L5.5 1.8 L9.7 7.7 Z" fill="#a3a3a3"/></svg>
<div class="a" style="left:2084px;top:382px;width:7px;height:180px;background:#a8a8a8;border-radius:4px;"></div>
<svg class="a" style="left:2082px;top:1300px;" width="11" height="10" viewBox="0 0 11 10"><path d="M1.3 2 L5.5 8.2 L9.7 2 Z" fill="#a3a3a3"/></svg>
<div class="a" style="left:610.5px;top:303.5px;width:870px;height:47px;background:transparent;border:4px solid #ff0000;border-radius:2px;box-sizing:border-box;"></div>
<div class="a" style="left:1717.2px;top:296px;width:119px;height:68px;background:transparent;border:4px solid #ff0000;border-radius:2px;box-sizing:border-box;"></div>
<svg class="a" style="left:900px;top:195px;" width="60" height="60" viewBox="0 0 60 60"><path d="M44.6 11.5 L33.5 35" stroke="#ff0000" stroke-width="3.8" stroke-linecap="round"/><path d="M24.5 53.2 L27.6 33.3 L38.5 38.3 Z" fill="#ff0000"/></svg>
<svg class="a" style="left:1705px;top:265px;" width="70" height="40" viewBox="0 0 70 40"><path d="M16.3 10.8 L42 22.5" stroke="#ff0000" stroke-width="3.8" stroke-linecap="round"/><path d="M55.1 29.7 L40.4 16.2 L35.3 26.5 Z" fill="#ff0000"/></svg>
</body></html>
